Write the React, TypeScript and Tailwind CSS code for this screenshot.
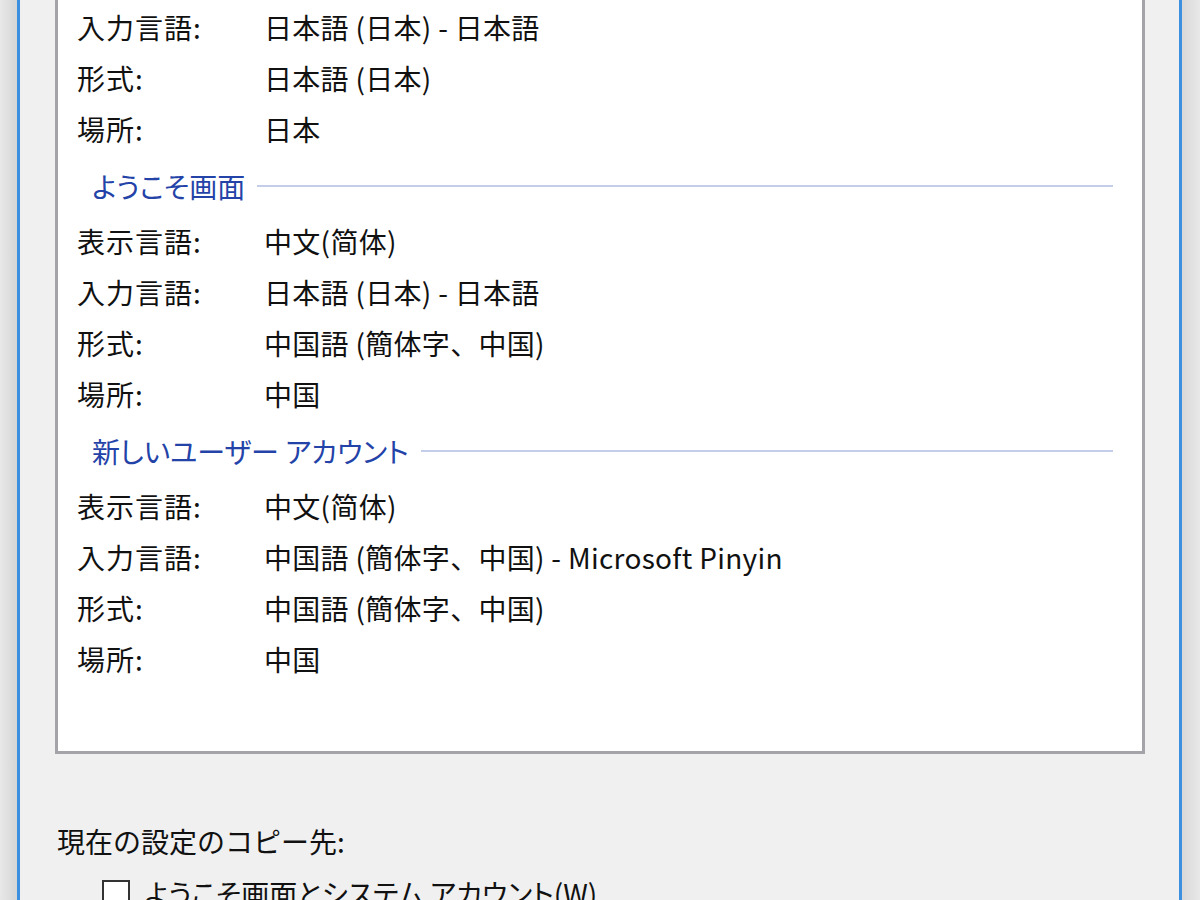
import React from "react";

const FONT = { fontFamily: '"Noto Sans CJK JP", "Noto Sans", sans-serif' };
const PALT = { fontFeatureSettings: '"palt"' };

function Row({ label, value }: { label: string; value: React.ReactNode }) {
  return (
    <div className="flex h-[51px] items-center text-[28px] leading-[30px] text-[#111]">
      <div className="w-[187px] shrink-0 tracking-[1px]">{label}</div>
      <div className="whitespace-nowrap tracking-[0.3px]">{value}</div>
    </div>
  );
}

function Header({ title }: { title: string }) {
  return (
    <div className="flex h-[61px] items-start pt-[17px] pl-[15px] pr-[29px]">
      <div className="flex w-full items-center">
        <span className="whitespace-nowrap text-[28px] leading-[30px] text-[#2443a8]" style={PALT}>{title}</span>
        <div className="ml-[12px] h-[2px] flex-1 bg-[#c4cde9]" />
      </div>
    </div>
  );
}

const Jian = () => <span style={{ fontFamily: '"Noto Sans CJK SC", sans-serif' }}>简</span>;

export default function App() {
  return (
    <div className="flex h-[900px] w-[1200px] overflow-hidden bg-[#e4e4e4]" style={FONT}>
      <div className="h-full w-[17px] shrink-0 bg-gradient-to-r from-[#e8e8e8] to-[#d6d6d6]" />
      <div className="h-full w-[3px] shrink-0 bg-[#3d8fe0]" />
      <div className="flex h-full flex-1 flex-col bg-[#f0f0f0] pl-[35px] pr-[34px]">
        <div className="h-[754px] shrink-0 border-x-[3px] border-b-[3px] border-[#a3a3a8] bg-white pl-[19px]">
          <div className="h-[1px]" />
          <Row label="入力言語:" value="日本語 (日本) - 日本語" />
          <Row label="形式:" value="日本語 (日本)" />
          <Row label="場所:" value="日本" />
          <Header title="ようこそ画面" />
          <Row label="表示言語:" value={<>中文(<Jian />体)</>} />
          <Row label="入力言語:" value="日本語 (日本) - 日本語" />
          <Row label="形式:" value="中国語 (簡体字、中国)" />
          <Row label="場所:" value="中国" />
          <Header title="新しいユーザー アカウント" />
          <Row label="表示言語:" value={<>中文(<Jian />体)</>} />
          <Row label="入力言語:" value="中国語 (簡体字、中国) - Microsoft Pinyin" />
          <Row label="形式:" value="中国語 (簡体字、中国)" />
          <Row label="場所:" value="中国" />
        </div>
        <div className="mt-[72px] -ml-[35px] pl-[37px] text-[28px] leading-[30px] text-[#111]">現在の設定のコピー先:</div>
        <div className="mt-[22px] flex items-start pl-[47px]">
          <div className="mt-[2px] h-[28px] w-[28px] shrink-0 border-2 border-[#333] bg-white" />
          <span className="ml-[14px] whitespace-nowrap text-[28px] leading-[30px] text-[#111]" style={PALT}>ようこそ画面とシステム アカウント(W)</span>
        </div>
      </div>
      <div className="h-full w-[3px] shrink-0 bg-[#3d8fe0]" />
      <div className="h-full w-[18px] shrink-0 bg-gradient-to-r from-[#d8d8d8] to-[#e8e8e8]" />
    </div>
  );
}
